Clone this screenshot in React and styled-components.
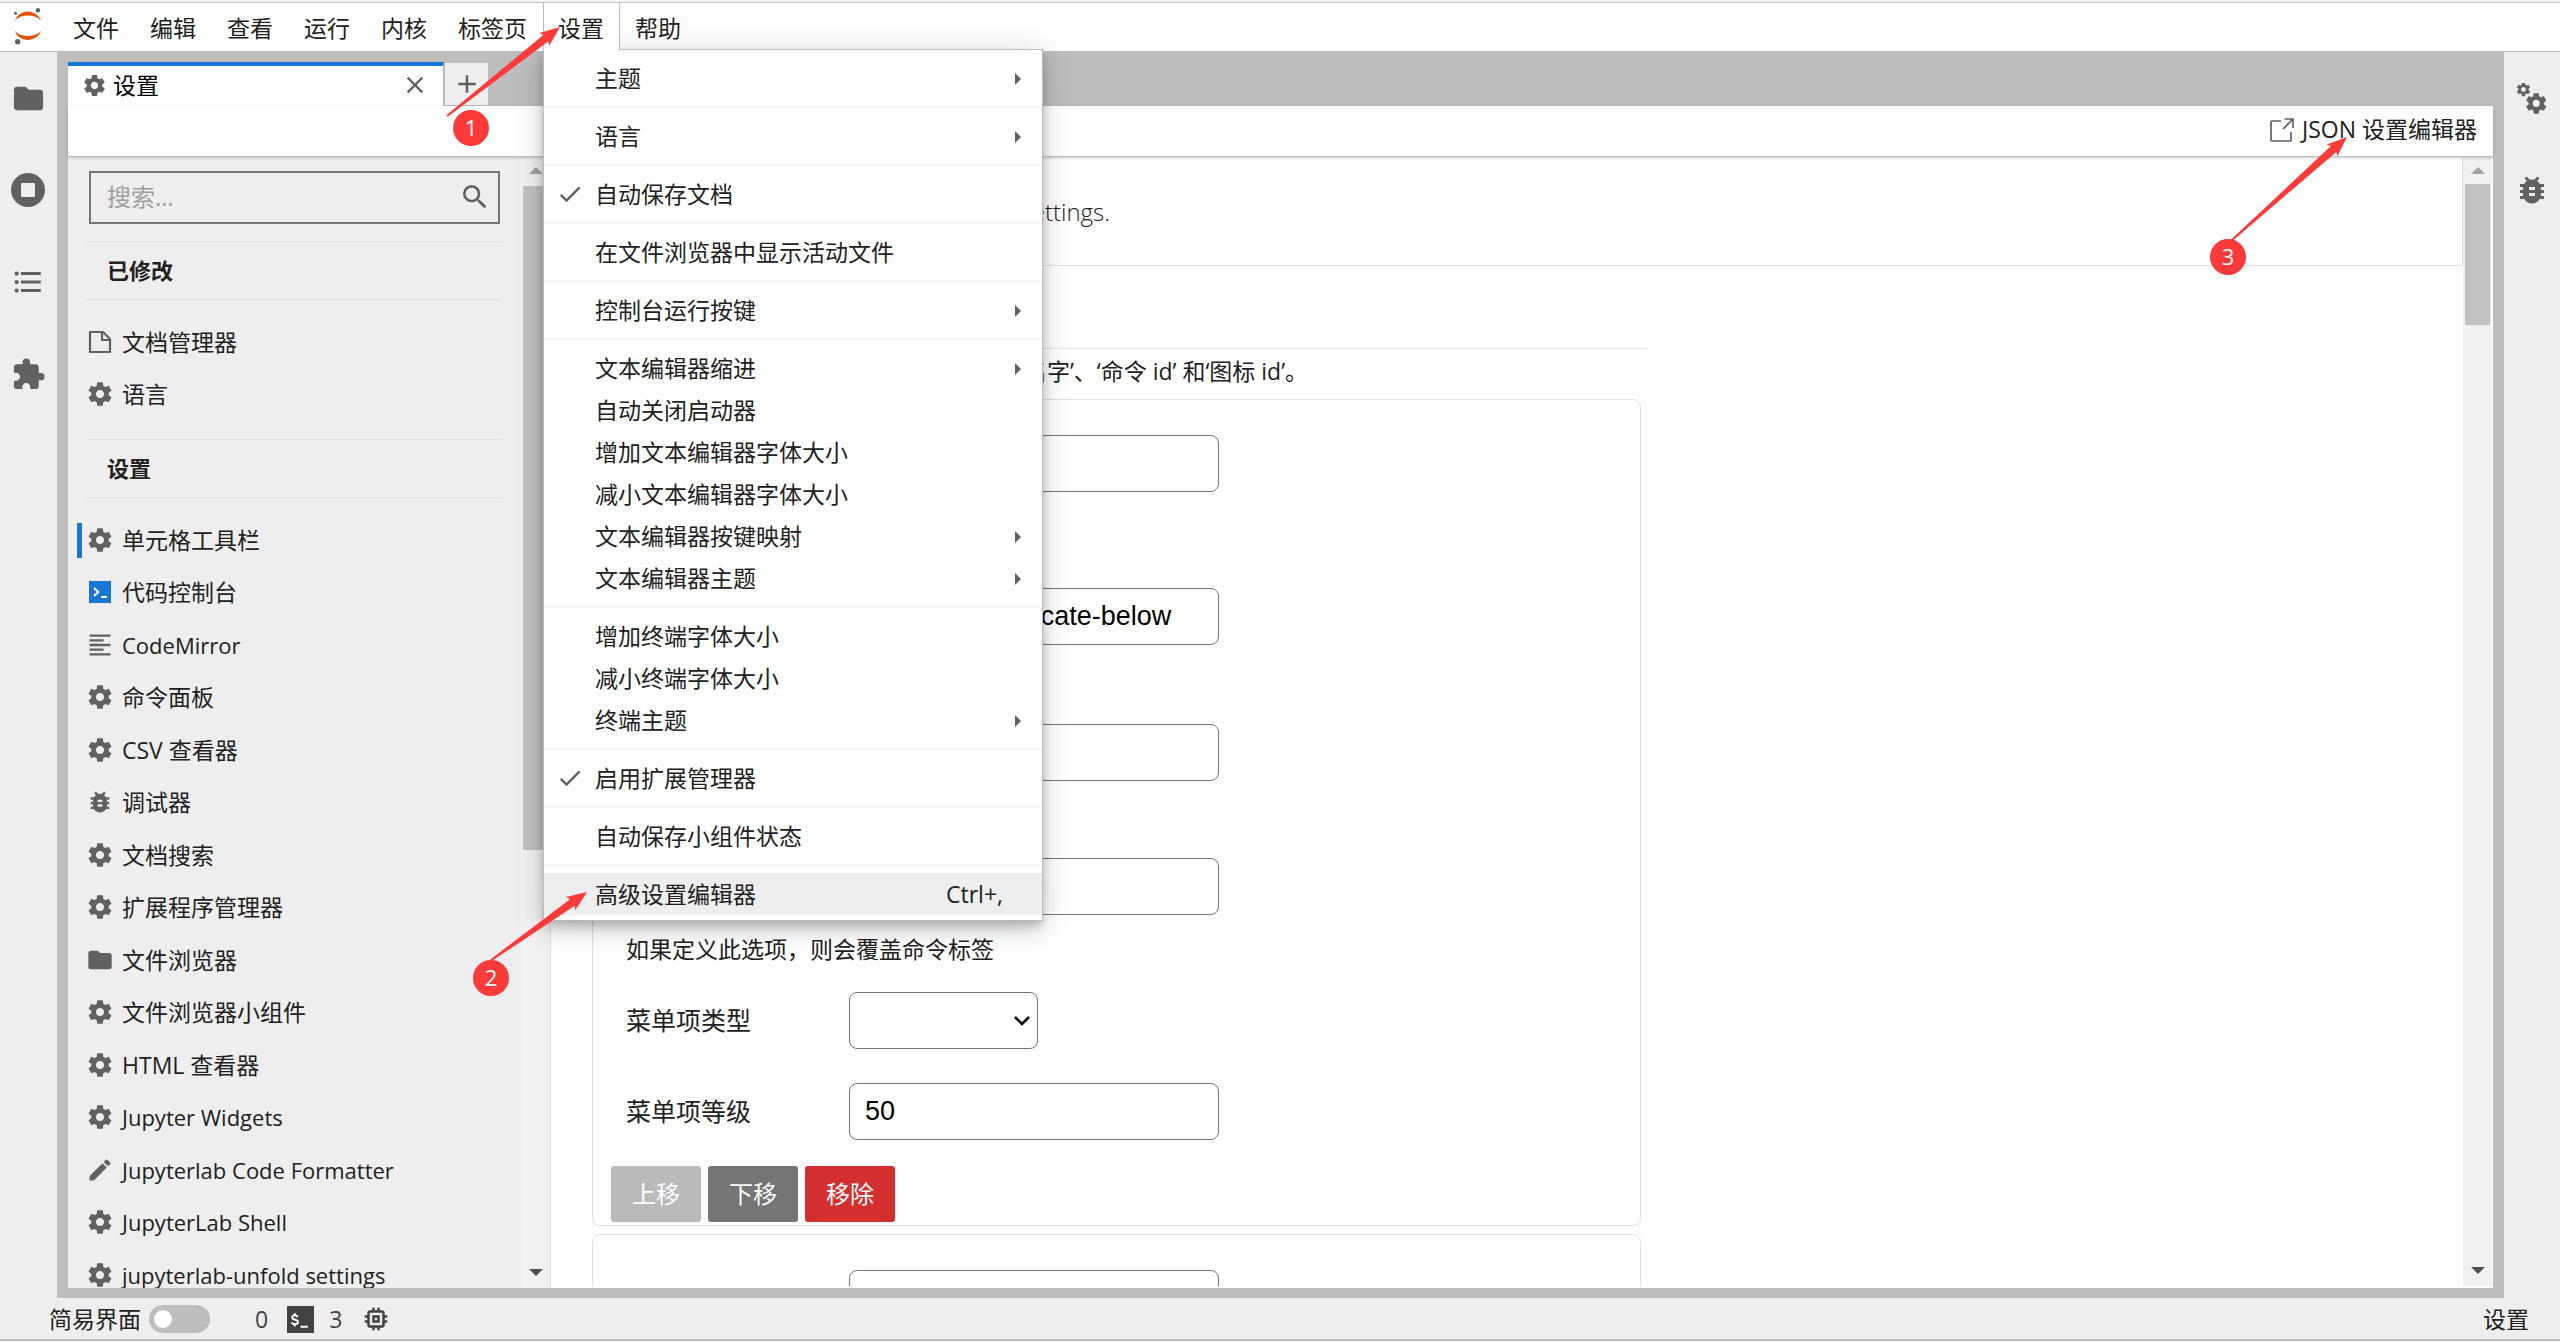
import React from 'react';
import styled, { createGlobalStyle } from 'styled-components';
import {
  MdAdd,
  MdBugReport,
  MdCheck,
  MdClose,
  MdEdit,
  MdExtension,
  MdFolder,
  MdFormatAlignLeft,
  MdFormatListBulleted,
  MdMemory,
  MdSearch,
} from 'react-icons/md';

const GEAR =
  'M19.43 12.98c.04-.32.07-.64.07-.98s-.03-.66-.07-.98l2.11-1.65c.19-.15.24-.42.12-.64l-2-3.46c-.12-.22-.39-.3-.61-.22l-2.49 1c-.52-.4-1.08-.73-1.69-.98l-.38-2.65C14.46 2.18 14.25 2 14 2h-4c-.25 0-.46.18-.49.42l-.38 2.65c-.61.25-1.17.59-1.69.98l-2.49-1c-.23-.09-.49 0-.61.22l-2 3.46c-.13.22-.07.49.12.64l2.11 1.65c-.04.32-.07.65-.07.98s.03.66.07.98l-2.11 1.65c-.19.15-.24.42-.12.64l2 3.46c.12.22.39.3.61.22l2.49-1c.52.4 1.08.73 1.69.98l.38 2.65c.03.24.24.42.49.42h4c.25 0 .46-.18.49-.42l.38-2.65c.61-.25 1.17-.59 1.69-.98l2.49 1c.23.09.49 0 .61-.22l2-3.46c.12-.22.07-.49-.12-.64l-2.11-1.65zM12 15.5c-1.93 0-3.5-1.57-3.5-3.5s1.57-3.5 3.5-3.5 3.5 1.57 3.5 3.5-1.57 3.5-3.5 3.5z';

const GearIcon = ({ size = 28 }) => (
  <svg width={size} height={size} viewBox="0 0 24 24" fill="currentColor">
    <path d={GEAR} />
  </svg>
);

const GearsIcon = () => (
  <svg width="30" height="31" viewBox="0 0 30 31" fill="currentColor">
    <path d={GEAR} transform="translate(-1.6 -1.6) scale(.67)" />
    <path d={GEAR} transform="translate(7 8.2) scale(1.02)" />
  </svg>
);

const StopIcon = () => (
  <svg width="34" height="34" viewBox="0 0 34 34">
    <circle cx="17" cy="17" r="17" fill="currentColor" />
    <rect x="10" y="10" width="14" height="14" rx="1" fill="#eee" />
  </svg>
);

const FileIcon = () => (
  <svg width="28" height="28" viewBox="0 0 28 28" fill="none" stroke="currentColor" strokeWidth="2.200" strokeLinejoin="round">
    <path d="M4 4h13l7 7v13H4z" />
    <path d="M16 4v8h8" />
  </svg>
);

const ConsoleIcon = () => (
  <svg width="28" height="28" viewBox="0 0 28 28">
    <rect x="3" y="3" width="22" height="22" fill="#1976d2" />
    <path d="M8 10l4.300 4-4.300 4M15 19h6" fill="none" stroke="#fff" strokeWidth="2" />
  </svg>
);

const TerminalIcon = () => (
  <svg width="27" height="27" viewBox="0 0 28 28">
    <rect width="28" height="28" fill="#424242" />
    <path
      d="M11 11.500c-.6-1.300-1.600-1.900-2.900-1.900-1.600 0-2.700.8-2.700 2.200 0 3.200 5.900 1.600 5.900 4.800 0 1.500-1.300 2.400-3.100 2.400-1.600 0-2.800-.7-3.300-2M8.100 7.500v2.200M8.100 19v2.200M14 21.500h7.500"
      fill="none"
      stroke="#fff"
      strokeWidth="2"
    />
  </svg>
);

const OpenIcon = () => (
  <svg width="24" height="24" viewBox="0 0 24 24" fill="none" stroke="currentColor" strokeWidth="1.700">
    <path d="M11 3H2a1 1 0 0 0-1 1v18a1 1 0 0 0 1 1h18a1 1 0 0 0 1-1v-8" />
    <path d="M13 11L22.500 1.500M14.500 1h8.500v9" />
  </svg>
);

const JupyterLogo = () => (
  <svg width="30" height="38" viewBox="0 0 30 38">
    <path d="M2 12.500C4 7 9 3.500 14.700 3.500S26 7 28 12.500C25 9 20.200 7.500 14.900 7.500S5 9 2 12.500z" fill="#e65100" />
    <path d="M2 23C4 28.500 9 32 14.700 32S26 28.500 28 23C25 26.500 20.200 28 14.900 28S5 26.500 2 23z" fill="#e65100" />
    <circle cx="25" cy="2.300" r="2.200" fill="#616161" />
    <circle cx="2.500" cy="5.200" r="1.500" fill="#616161" />
    <circle cx="4.700" cy="33.700" r="2.700" fill="#616161" />
  </svg>
);

const menus = ['文件', '编辑', '查看', '运行', '内核', '标签页', '设置', '帮助'];

const menuGroups = [
  [{ label: '主题', sub: true }],
  [{ label: '语言', sub: true }],
  [{ label: '自动保存文档', checked: true }],
  [{ label: '在文件浏览器中显示活动文件' }],
  [{ label: '控制台运行按键', sub: true }],
  [
    { label: '文本编辑器缩进', sub: true },
    { label: '自动关闭启动器' },
    { label: '增加文本编辑器字体大小' },
    { label: '减小文本编辑器字体大小' },
    { label: '文本编辑器按键映射', sub: true },
    { label: '文本编辑器主题', sub: true },
  ],
  [{ label: '增加终端字体大小' }, { label: '减小终端字体大小' }, { label: '终端主题', sub: true }],
  [{ label: '启用扩展管理器', checked: true }],
  [{ label: '自动保存小组件状态' }],
  [{ label: '高级设置编辑器', shortcut: 'Ctrl+,', active: true }],
];

const modified = [
  { label: '文档管理器', icon: <FileIcon /> },
  { label: '语言', icon: <GearIcon /> },
];

const plugins = [
  { label: '单元格工具栏', icon: <GearIcon />, selected: true },
  { label: '代码控制台', icon: <ConsoleIcon /> },
  { label: 'CodeMirror', icon: <MdFormatAlignLeft /> },
  { label: '命令面板', icon: <GearIcon /> },
  { label: 'CSV 查看器', icon: <GearIcon /> },
  { label: '调试器', icon: <MdBugReport /> },
  { label: '文档搜索', icon: <GearIcon /> },
  { label: '扩展程序管理器', icon: <GearIcon /> },
  { label: '文件浏览器', icon: <MdFolder /> },
  { label: '文件浏览器小组件', icon: <GearIcon /> },
  { label: 'HTML 查看器', icon: <GearIcon /> },
  { label: 'Jupyter Widgets', icon: <GearIcon /> },
  { label: 'Jupyterlab Code Formatter', icon: <MdEdit /> },
  { label: 'JupyterLab Shell', icon: <GearIcon /> },
  { label: 'jupyterlab-unfold settings', icon: <GearIcon /> },
];

const isLatin = (text) => /^[ -~]+$/.test(text);

const PluginList = ({ items }) => (
  <List>
    {items.map((item) => (
      <li key={item.label}>
        <PluginButton $selected={item.selected} $latin={isLatin(item.label)}>
          {item.icon}
          {item.label}
        </PluginButton>
      </li>
    ))}
  </List>
);

const ScrollBar = ({ start, size, wide }) => (
  <Track $wide={wide} aria-hidden="true">
    <Triangle $color="#a3a3a3" $up />
    <Thumb $start={start} $size={size} />
    <Triangle $color="#505050" />
  </Track>
);

// dx / dy lead from the thin end of the arrow to its tip
const Callout = ({ number, dx, dy, badgeX, badgeY, ...place }) => {
  const len = Math.hypot(dx, dy);
  const ux = dx / len;
  const uy = dy / len;
  const at = (along, side) => `${along * ux - side * uy},${along * uy + side * ux}`;
  const points = [
    at(0, -1),
    at(len - 18, -4),
    at(len - 20, -8),
    at(len, 0),
    at(len - 20, 8),
    at(len - 18, 4),
    at(0, 1),
  ].join(' ');
  return (
    <CalloutOrigin {...place}>
      <svg width="1" height="1" overflow="visible">
        <polygon points={points} fill="#fc3a3a" />
      </svg>
      <Badge $x={badgeX} $y={badgeY}>{number}</Badge>
    </CalloutOrigin>
  );
};

const TextField = ({ id, label, name, value = '', help, helpHeight }) => (
  <Field>
    <FieldRow>
      <label htmlFor={id}>{label}</label>
      <TextInput id={id} type="text" aria-label={name} defaultValue={value} />
    </FieldRow>
    {(help || helpHeight) && <Help $height={helpHeight}>{help}</Help>}
  </Field>
);

export default function App() {
  return (
    <Shell>
      <GlobalStyle />
      <MenuBar>
        <Logo>
          <JupyterLogo />
        </Logo>
        {menus.map((name) => (
          <MenuSlot key={name}>
            <MenuTitle $open={name === '设置'}>{name}</MenuTitle>
            {name === '设置' && (
              <Menu>
                {menuGroups.map((group) => (
                  <MenuGroup key={group[0].label}>
                    {group.map((item) => (
                      <MenuItem key={item.label} $active={item.active}>
                        <CheckSlot>{item.checked && <MdCheck />}</CheckSlot>
                        <span>{item.label}</span>
                        {item.shortcut && <Shortcut>{item.shortcut}</Shortcut>}
                        {item.sub && <SubArrow />}
                      </MenuItem>
                    ))}
                  </MenuGroup>
                ))}
              </Menu>
            )}
          </MenuSlot>
        ))}
      </MenuBar>

      <Body>
        <SideBar $width={57}>
          <SideButton aria-label="文件浏览器"><MdFolder size={35} /></SideButton>
          <SideButton aria-label="运行"><StopIcon /></SideButton>
          <SideButton aria-label="目录"><MdFormatListBulleted size={34} /></SideButton>
          <SideButton aria-label="扩展"><MdExtension size={35} /></SideButton>
        </SideBar>

        <Dock>
          <TabBar>
            <Tab>
              <GearIcon size={25} />
              <span>设置</span>
              <IconButton aria-label="关闭"><MdClose size={28} /></IconButton>
            </Tab>
            <AddTab aria-label="新建"><MdAdd size={30} /></AddTab>
          </TabBar>
          <ToolBar>
            <ToolButton>
              <OpenIcon />
              JSON 设置编辑器
            </ToolButton>
          </ToolBar>
          <Split>
            <PluginPanel>
              <PluginScroll>
                <SearchBox>
                  <input type="text" placeholder="搜索…" aria-label="搜索" />
                  <MdSearch size={32} />
                </SearchBox>
                <Heading>已修改</Heading>
                <PluginList items={modified} />
                <Heading>设置</Heading>
                <PluginList items={plugins} />
              </PluginScroll>
              <ScrollBar start={29} size={664} />
            </PluginPanel>

            <Editor>
              <EditorScroll>
                <Intro>
                  <p>Customize toolbar of notebook cells in settings.</p>
                </Intro>
                <Form>
                  <FormTitle />
                  <Description>工具栏按钮的列表，每一项都必须要包含‘名字’、‘命令 id’ 和‘图标 id’。</Description>
                  <Card>
                    <TextField id="args" name="命令参数" helpHeight={62} />
                    <TextField id="command" name="命令 id" value="notebook:duplicate-below" helpHeight={45} />
                    <TextField id="icon" name="图标 id" helpHeight={43} />
                    <TextField id="label" name="标签" help="如果定义此选项，则会覆盖命令标签" helpHeight={43} />
                    <Field>
                      <FieldRow>
                        <label htmlFor="type">菜单项类型</label>
                        <SelectWrap>
                          <Select id="type" defaultValue="">
                            <option value=""></option>
                          </Select>
                          <svg width="18" height="12" viewBox="0 0 18 12" fill="none" stroke="#000" strokeWidth="2.500">
                            <path d="M2 2l7 7 7-7" />
                          </svg>
                        </SelectWrap>
                      </FieldRow>
                    </Field>
                    <TextField id="rank" label="菜单项等级" value="50" />
                    <Actions>
                      <ActionButton $color="#bababa" type="button" disabled>上移</ActionButton>
                      <ActionButton $color="#757575" type="button">下移</ActionButton>
                      <ActionButton $color="#d32f2f" type="button">移除</ActionButton>
                    </Actions>
                  </Card>
                  <Card>
                    <TextField id="args-next" name="命令参数" />
                  </Card>
                </Form>
              </EditorScroll>
              <ScrollBar start={27} size={141} wide />
            </Editor>
          </Split>
        </Dock>

        <SideBar $width={56}>
          <SideButton aria-label="属性"><GearsIcon /></SideButton>
          <SideButton aria-label="调试器"><MdBugReport size={36} /></SideButton>
        </SideBar>
      </Body>

      <StatusBar>
        <label htmlFor="simple">简易界面</label>
        <Switch id="simple" type="checkbox" />
        <Counts>
          <span>0</span>
          <TerminalIcon />
          <span>3</span>
          <MdMemory size={30} />
        </Counts>
        <Mode>设置</Mode>
      </StatusBar>

      <Callout number="1" left="447px" top="116px" dx={113} dy={-89} badgeX={24} badgeY={12} />
      <Callout number="2" left="490px" top="961px" dx={97} dy={-69} badgeX={1} badgeY={17} />
      <Callout number="3" right="327px" top="240px" dx={115} dy={-103} badgeX={-4} badgeY={17} />
    </Shell>
  );
}

const GlobalStyle = createGlobalStyle`
  * {
    box-sizing: border-box;
  }
  body {
    margin: 0;
    background: #f5f5f5;
    color: #212121;
    font: 23px/31px 'Open Sans', 'Noto Sans CJK SC', sans-serif;
  }
  button,
  input,
  select {
    font: inherit;
    color: inherit;
    border: 0;
    padding: 0;
    background: none;
  }
  ul {
    list-style: none;
    margin: 0;
    padding: 0;
  }
  svg {
    flex: none;
  }
`;

const Shell = styled.div`
  height: 100vh;
  display: flex;
  flex-direction: column;
  overflow: hidden;
  padding: 2px 0 1px;
`;

const MenuBar = styled.nav`
  display: flex;
  height: 50px;
  background: #fff;
  border-top: 1px solid #bdbdbd;
  border-bottom: 1px solid #bdbdbd;
`;

const Logo = styled.div`
  width: 58px;
  padding: 5px 0 0 13px;
`;

const MenuSlot = styled.div`
  position: relative;
`;

const MenuTitle = styled.button`
  position: relative;
  z-index: ${(p) => (p.$open ? 3 : 0)};
  height: 48px;
  padding: 2px 15px 0 14px;
  display: block;
  line-height: 46px;
  border: solid ${(p) => (p.$open ? '#bdbdbd' : 'transparent')};
  border-width: 0 1px;
  background: ${(p) => (p.$open ? '#fff' : 'none')};
`;

const Menu = styled.ul`
  position: absolute;
  z-index: 2;
  top: 46px;
  left: 0;
  width: 500px;
  padding: 7px 0 5px;
  background: #fff;
  border: 1px solid #bdbdbd;
  box-shadow: 0 5px 9px -2px rgba(0, 0, 0, 0.2), 0 11px 18px rgba(0, 0, 0, 0.14), 0 2px 32px rgba(0, 0, 0, 0.12);
`;

const MenuGroup = styled.div`
  & + & {
    margin-top: 7px;
    padding-top: 7px;
    border-top: 2px solid #f5f5f5;
  }
`;

const MenuItem = styled.li`
  display: flex;
  align-items: center;
  height: 42px;
  padding-right: 21px;
  white-space: nowrap;
  background: ${(p) => (p.$active ? '#eee' : 'none')};
`;

const CheckSlot = styled.span`
  display: flex;
  width: 51px;
  padding-left: 12px;
  color: #616161;
  font-size: 28px;
`;

const Shortcut = styled.span`
  margin-left: auto;
  padding-right: 18px;
`;

const SubArrow = styled.i`
  margin: 2px 0 0 auto;
  border: solid transparent;
  border-width: 6px 0 6px 6px;
  border-left-color: #616161;
`;

const Body = styled.div`
  flex: 1;
  min-height: 0;
  display: flex;
  background: #bdbdbd;
`;

const SideBar = styled.aside`
  width: ${(p) => p.$width}px;
  flex: none;
  background: #eee;
  color: #616161;
`;

const SideButton = styled.button`
  display: flex;
  align-items: center;
  justify-content: center;
  width: 56px;
  height: 92px;
`;

const Dock = styled.main`
  flex: 1;
  min-width: 0;
  display: flex;
  flex-direction: column;
  padding: 10px 11px 10px;
`;

const TabBar = styled.div`
  display: flex;
  height: 44px;
`;

const Tab = styled.div`
  display: flex;
  align-items: center;
  gap: 6px;
  width: 376px;
  padding: 0 14px 2px;
  background: #fff;
  border-top: 4px solid #1976d2;
  border-right: 1px solid #bdbdbd;
  color: #000;
  svg {
    color: #616161;
  }
`;

const IconButton = styled.button`
  display: flex;
  margin-left: auto;
`;

const AddTab = styled.button`
  display: flex;
  align-items: center;
  justify-content: center;
  width: 43px;
  margin: 1px 0 1px 1px;
  background: #eee;
  color: #616161;
`;

const ToolBar = styled.div`
  position: relative;
  z-index: 1;
  display: flex;
  justify-content: flex-end;
  height: 51px;
  padding: 0 16px 3px 0;
  background: #fff;
  border-bottom: 1px solid #bdbdbd;
  box-shadow: 0 1px 3px rgba(0, 0, 0, 0.2);
`;

const ToolButton = styled.button`
  display: flex;
  align-items: center;
  gap: 8px;
  svg {
    color: #616161;
  }
`;

const Split = styled.div`
  flex: 1;
  min-height: 0;
  display: flex;
  background: #fff;
`;

const PluginPanel = styled.section`
  display: flex;
  width: 483px;
  background: #eee;
  border-right: 1px solid #e0e0e0;
`;

const PluginScroll = styled.div`
  flex: 1;
  overflow: hidden;
  padding: 14px 18px 0;
`;

const SearchBox = styled.div`
  display: flex;
  align-items: center;
  height: 53px;
  margin: 0 3px 17px;
  padding: 0 7px 2px 16px;
  border: 2px solid #757575;
  color: #616161;
  input {
    flex: 1;
    min-width: 0;
    font-size: 24px;
    outline: 0;
  }
  input::placeholder {
    color: #9e9e9e;
  }
`;

const Heading = styled.h3`
  margin: 0;
  padding: 14px 21px;
  border: solid #e0e0e0;
  border-width: 1px 0;
  font-size: 22px;
  line-height: 29px;
  font-weight: 700;
`;

const List = styled.ul`
  margin: 16px 0 18px;
  li:nth-child(even) {
    padding-bottom: 1px;
  }
`;

const PluginButton = styled.button`
  position: relative;
  display: flex;
  align-items: center;
  gap: 8px;
  width: 100%;
  height: 52px;
  white-space: nowrap;
  font-size: ${(p) => (p.$latin ? 22 : 23)}px;
  svg {
    width: 28px;
    height: 28px;
    color: #616161;
  }
  &::before {
    content: ${(p) => (p.$selected ? "''" : 'none')};
    position: absolute;
    left: -9px;
    top: 9px;
    width: 5px;
    height: 35px;
    background: #1976d2;
  }
`;

const Track = styled.div`
  display: flex;
  flex-direction: column;
  align-items: center;
  flex: none;
  width: 29px;
  margin: ${(p) => (p.$wide ? '0 1px 2px 0' : '0')};
  padding: 10px 0 12px;
  background: #f1f1f1;
`;

const Triangle = styled.i`
  border: solid transparent;
  border-width: ${(p) => (p.$up ? '0 7px 7px' : '7px 7px 0')};
  border-${(p) => (p.$up ? 'bottom' : 'top')}-color: ${(p) => p.$color};
`;

const Thumb = styled.div`
  width: 25px;
  height: ${(p) => p.$size}px;
  margin: ${(p) => p.$start - 17}px 0 auto;
  background: #c1c1c1;
`;

const Editor = styled.section`
  flex: 1;
  min-width: 0;
  display: flex;
`;

const EditorScroll = styled.div`
  flex: 1;
  overflow: hidden;
  margin-bottom: 2px;
`;

const Intro = styled.header`
  height: 109px;
  padding: 38px 0 0 50px;
  border: solid #e0e0e0;
  border-width: 0 1px 1px 0;
  font-size: 24px;
  line-height: 33px;
  font-weight: 300;
  p {
    margin: 0;
  }
`;

const Form = styled.form`
  width: 1096px;
  padding-left: 41px;
`;

const FormTitle = styled.div`
  height: 83px;
  border-bottom: 1px solid #e0e0e0;
`;

const Description = styled.p`
  margin: 0;
  padding: 7px 0 12px 14px;
`;

const Card = styled.fieldset`
  width: 1049px;
  margin: 0 0 8px;
  padding: 31px 18px 3px;
  border: 1px solid #e0e0e0;
  border-radius: 8px;
`;

const Field = styled.div`
  padding-left: 15px;
  & + & {
    margin-top: 26px;
  }
`;

const FieldRow = styled.div`
  display: flex;
  align-items: center;
  padding: 4px 0;
  label {
    width: 223px;
    font-size: 25px;
  }
`;

const TextInput = styled.input`
  width: 370px;
  height: 57px;
  padding: 0 14px 0 15px;
  border: 1px solid #757575;
  border-radius: 8px;
  background: #fff;
  color: #000;
  font: 27px/31px 'Liberation Sans', Arial, sans-serif;
`;

const SelectWrap = styled.div`
  position: relative;
  svg {
    position: absolute;
    right: 7px;
    top: 23px;
    pointer-events: none;
  }
`;

const Select = styled.select`
  display: block;
  appearance: none;
  width: 189px;
  height: 57px;
  border: 1px solid #757575;
  border-radius: 8px;
  background: #fff;
`;

const Help = styled.div`
  height: ${(p) => p.$height}px;
  padding-top: 19px;
  line-height: 23px;
`;

const Actions = styled.div`
  display: flex;
  gap: 7px;
  padding-top: 22px;
`;

const ActionButton = styled.button`
  width: 90px;
  height: 56px;
  padding-bottom: 2px;
  border-radius: 3px;
  background: ${(p) => p.$color};
  color: #fff;
  font-size: 24px;
`;

const StatusBar = styled.footer`
  display: flex;
  align-items: center;
  height: 43px;
  padding: 1px 31px 0 49px;
  background: #eee;
  border-bottom: 2px solid #bdbdbd;
`;

const Switch = styled.input`
  appearance: none;
  width: 61px;
  height: 28px;
  margin: 0 0 0 8px;
  padding: 5px;
  border-radius: 14px;
  background: #bdbdbd;
  &::before {
    content: '';
    display: block;
    width: 18px;
    height: 18px;
    border-radius: 50%;
    background: #fff;
  }
`;

const Counts = styled.div`
  display: flex;
  align-items: center;
  gap: 15px;
  margin-left: 45px;
  color: #424242;
  svg {
    margin-left: 4px;
  }
`;

const Mode = styled.span`
  margin-left: auto;
`;

const CalloutOrigin = styled.div.withConfig({
  shouldForwardProp: (prop) => !['left', 'right', 'top'].includes(prop),
})`
  position: absolute;
  z-index: 5;
  width: 1px;
  height: 1px;
  left: ${(p) => p.left || 'auto'};
  right: ${(p) => p.right || 'auto'};
  top: ${(p) => p.top};
  svg {
    display: block;
  }
`;

const Badge = styled.b`
  position: absolute;
  left: ${(p) => p.$x - 18}px;
  top: ${(p) => p.$y - 18}px;
  width: 36px;
  height: 36px;
  border-radius: 50%;
  background: #fc3a3a;
  color: #fff;
  font-size: 22px;
  font-weight: 400;
  line-height: 34px;
  text-align: center;
`;
